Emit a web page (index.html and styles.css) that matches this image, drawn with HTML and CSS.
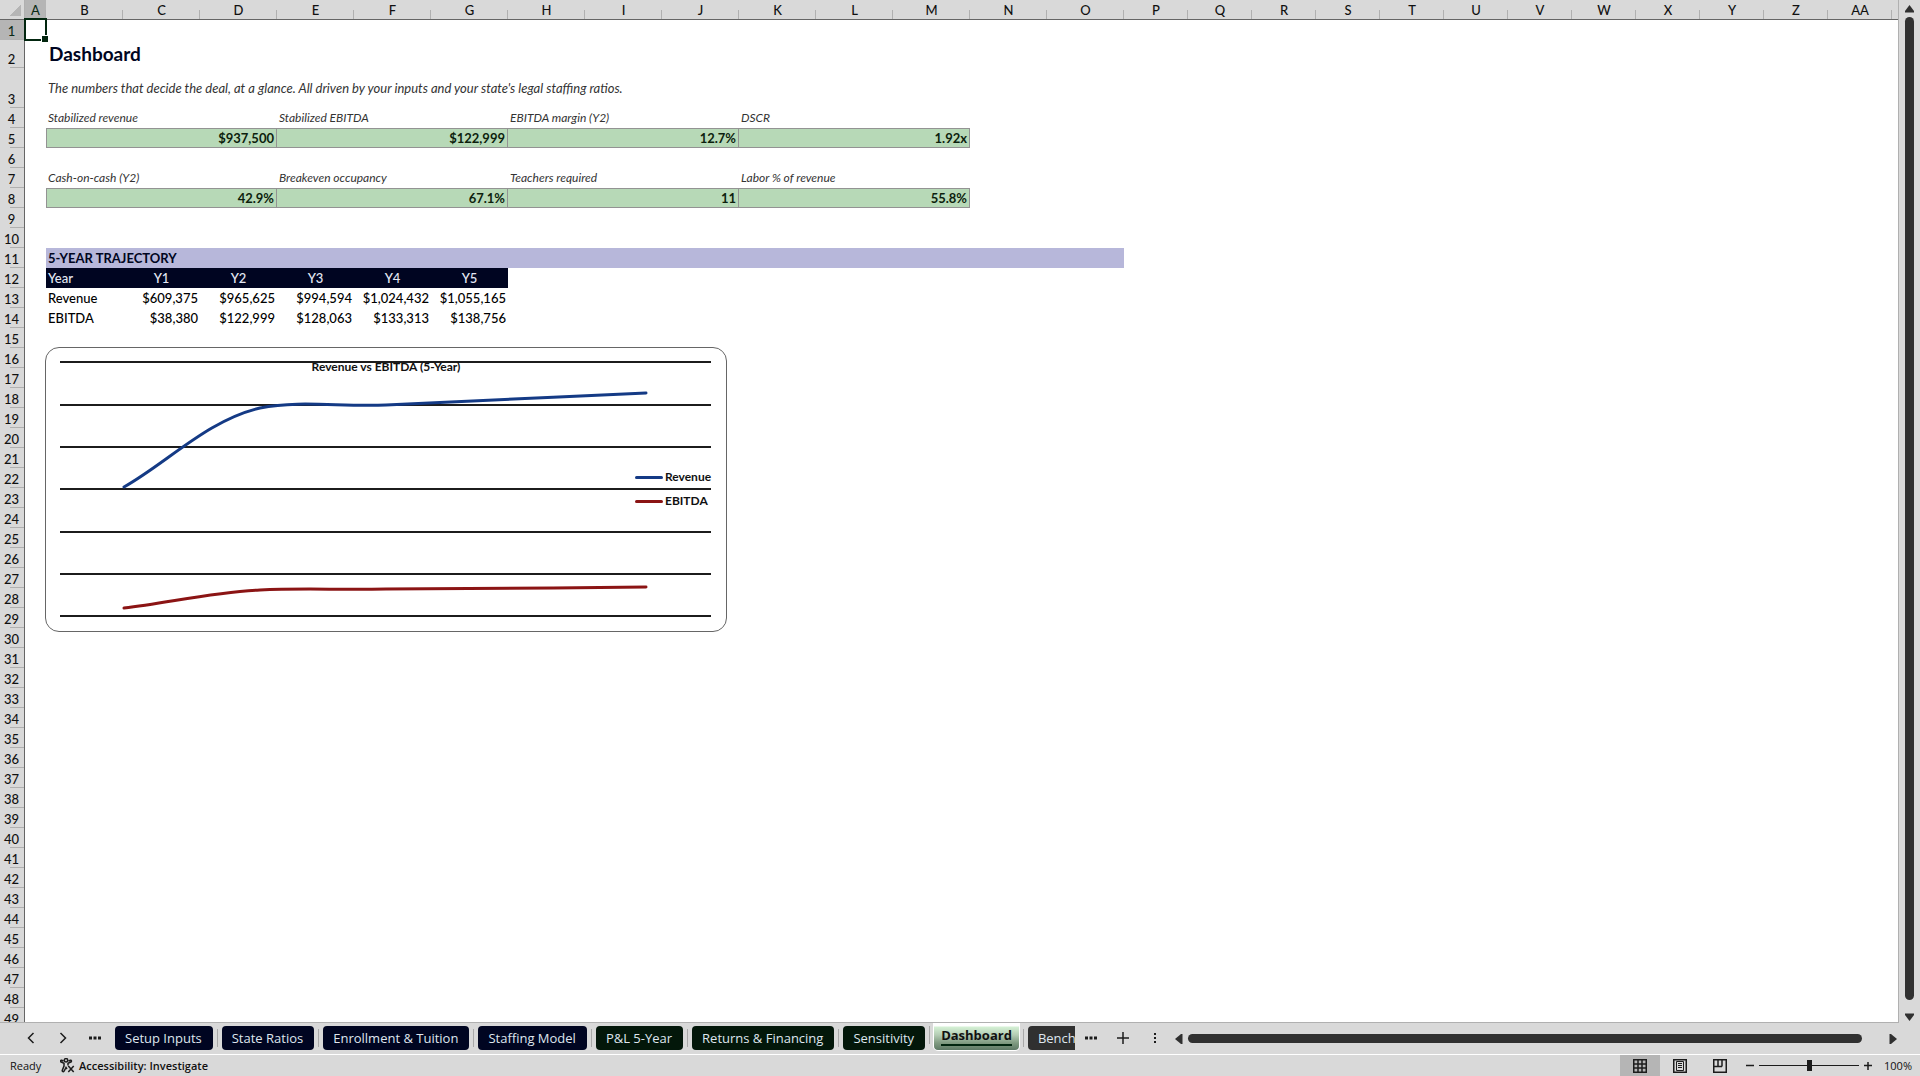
FILE: index.html
```html
<!DOCTYPE html>
<html lang="en">

<head>
    <meta charset="UTF-8">
    <meta name="viewport" content="width=device-width, initial-scale=1.0">
    <title>Dashboard</title>
    <link rel="stylesheet" href="styles.css">
</head>

<body>
    <div class="main">
        <div class="grid">
            <table class="sheet">
                <colgroup>
                    <col class="col_num">
                    <col class="col_a">
                    <col class="col_wide" span="14">
                    <col class="col_std" span="12">
                    <col>
                </colgroup>
                <thead>
                    <tr>
                        <th class="corner"></th>
                        <th class="selected">A</th>
                        <th>B</th>
                        <th>C</th>
                        <th>D</th>
                        <th>E</th>
                        <th>F</th>
                        <th>G</th>
                        <th>H</th>
                        <th>I</th>
                        <th>J</th>
                        <th>K</th>
                        <th>L</th>
                        <th>M</th>
                        <th>N</th>
                        <th>O</th>
                        <th>P</th>
                        <th>Q</th>
                        <th>R</th>
                        <th>S</th>
                        <th>T</th>
                        <th>U</th>
                        <th>V</th>
                        <th>W</th>
                        <th>X</th>
                        <th>Y</th>
                        <th>Z</th>
                        <th>AA</th>
                        <th class="rest"></th>
                    </tr>
                </thead>
                <tbody>
                    <tr>
                        <th class="selected">1</th>
                        <td class="cell_active"><span class="cursor"></span></td>
                        <td colspan="27"></td>
                    </tr>
                    <tr class="row_title">
                        <th>2</th>
                        <td></td>
                        <td colspan="27" class="title">Dashboard</td>
                    </tr>
                    <tr class="row_intro">
                        <th>3</th>
                        <td></td>
                        <td colspan="27" class="intro">The numbers that decide the deal, at a glance. All driven by your inputs and your state's legal staffing ratios.</td>
                    </tr>
                    <tr>
                        <th>4</th>
                        <td></td>
                        <td colspan="3" class="label">Stabilized revenue</td>
                        <td colspan="3" class="label">Stabilized EBITDA</td>
                        <td colspan="3" class="label">EBITDA margin (Y2)</td>
                        <td colspan="3" class="label">DSCR</td>
                        <td colspan="15"></td>
                    </tr>
                    <tr>
                        <th>5</th>
                        <td></td>
                        <td colspan="3" class="kpi kpi_first">$937,500</td>
                        <td colspan="3" class="kpi">$122,999</td>
                        <td colspan="3" class="kpi">12.7%</td>
                        <td colspan="3" class="kpi">1.92x</td>
                        <td colspan="15"></td>
                    </tr>
                    <tr><th>6</th><td colspan="28"></td></tr>
                    <tr>
                        <th>7</th>
                        <td></td>
                        <td colspan="3" class="label">Cash-on-cash (Y2)</td>
                        <td colspan="3" class="label">Breakeven occupancy</td>
                        <td colspan="3" class="label">Teachers required</td>
                        <td colspan="3" class="label">Labor % of revenue</td>
                        <td colspan="15"></td>
                    </tr>
                    <tr>
                        <th>8</th>
                        <td></td>
                        <td colspan="3" class="kpi kpi_first">42.9%</td>
                        <td colspan="3" class="kpi">67.1%</td>
                        <td colspan="3" class="kpi">11</td>
                        <td colspan="3" class="kpi">55.8%</td>
                        <td colspan="15"></td>
                    </tr>
                    <tr><th>9</th><td colspan="28"></td></tr>
                    <tr><th>10</th><td colspan="28"></td></tr>
                    <tr>
                        <th>11</th>
                        <td></td>
                        <td colspan="14" class="section">5-YEAR TRAJECTORY</td>
                        <td colspan="13"></td>
                    </tr>
                    <tr>
                        <th>12</th>
                        <td></td>
                        <td class="year first">Year</td>
                        <td class="year">Y1</td>
                        <td class="year">Y2</td>
                        <td class="year">Y3</td>
                        <td class="year">Y4</td>
                        <td class="year">Y5</td>
                        <td colspan="21"></td>
                    </tr>
                    <tr>
                        <th>13</th>
                        <td></td>
                        <td>Revenue</td>
                        <td class="num">$609,375</td>
                        <td class="num">$965,625</td>
                        <td class="num">$994,594</td>
                        <td class="num">$1,024,432</td>
                        <td class="num">$1,055,165</td>
                        <td colspan="21"></td>
                    </tr>
                    <tr>
                        <th>14</th>
                        <td></td>
                        <td>EBITDA</td>
                        <td class="num">$38,380</td>
                        <td class="num">$122,999</td>
                        <td class="num">$128,063</td>
                        <td class="num">$133,313</td>
                        <td class="num">$138,756</td>
                        <td colspan="21"></td>
                    </tr>
                    <tr><th>15</th><td colspan="28"></td></tr>
                    <tr>
                        <th>16</th>
                        <td></td>
                        <td colspan="27" class="chart_cell">
                            <div class="chart">
                                <svg width="678" height="282" viewBox="1 1 678 282">
                                    <path class="line_grid" d="M15 15H666M15 58H666M15 100H666M15 142H666M15 185H666M15 227H666M15 269H666" />
                                    <path class="line_revenue" d="M79 140C123 115 163 73 215 61C255 53 295 60 341 58C387 56 513 50 601 46" />
                                    <path class="line_ebitda" d="M79 261C123 256 167 245 215 243C255 241 295 243 341 242C387 242 513 241 601 240" />
                                </svg>
                                <div class="chart_title">Revenue vs EBITDA (5-Year)</div>
                                <div class="legend">
                                    <div class="legend_item revenue">Revenue</div>
                                    <div class="legend_item ebitda">EBITDA</div>
                                </div>
                            </div>
                        </td>
                    </tr>
                    <tr><th>17</th><td colspan="28"></td></tr>
                    <tr><th>18</th><td colspan="28"></td></tr>
                    <tr><th>19</th><td colspan="28"></td></tr>
                    <tr><th>20</th><td colspan="28"></td></tr>
                    <tr><th>21</th><td colspan="28"></td></tr>
                    <tr><th>22</th><td colspan="28"></td></tr>
                    <tr><th>23</th><td colspan="28"></td></tr>
                    <tr><th>24</th><td colspan="28"></td></tr>
                    <tr><th>25</th><td colspan="28"></td></tr>
                    <tr><th>26</th><td colspan="28"></td></tr>
                    <tr><th>27</th><td colspan="28"></td></tr>
                    <tr><th>28</th><td colspan="28"></td></tr>
                    <tr><th>29</th><td colspan="28"></td></tr>
                    <tr><th>30</th><td colspan="28"></td></tr>
                    <tr><th>31</th><td colspan="28"></td></tr>
                    <tr><th>32</th><td colspan="28"></td></tr>
                    <tr><th>33</th><td colspan="28"></td></tr>
                    <tr><th>34</th><td colspan="28"></td></tr>
                    <tr><th>35</th><td colspan="28"></td></tr>
                    <tr><th>36</th><td colspan="28"></td></tr>
                    <tr><th>37</th><td colspan="28"></td></tr>
                    <tr><th>38</th><td colspan="28"></td></tr>
                    <tr><th>39</th><td colspan="28"></td></tr>
                    <tr><th>40</th><td colspan="28"></td></tr>
                    <tr><th>41</th><td colspan="28"></td></tr>
                    <tr><th>42</th><td colspan="28"></td></tr>
                    <tr><th>43</th><td colspan="28"></td></tr>
                    <tr><th>44</th><td colspan="28"></td></tr>
                    <tr><th>45</th><td colspan="28"></td></tr>
                    <tr><th>46</th><td colspan="28"></td></tr>
                    <tr><th>47</th><td colspan="28"></td></tr>
                    <tr><th>48</th><td colspan="28"></td></tr>
                    <tr><th>49</th><td colspan="28"></td></tr>
                </tbody>
            </table>
        </div>
        <div class="scroll_y">
            <svg width="9" height="8" viewBox="0 0 9 8"><path d="M4.500 0L9 6V7.500H0V6z" /></svg>
            <div class="bar_y"></div>
            <svg width="9" height="8" viewBox="0 0 9 8"><path d="M0 0.500H9V2L4.500 8L0 2z" /></svg>
        </div>
    </div>

    <div class="tabs">
        <div class="tabs_nav">
            <button class="icon_btn" aria-label="Previous sheet"><svg width="8" height="12" viewBox="0 0 8 12"><path d="M6.500 1L1.500 6L6.500 11" /></svg></button>
            <button class="icon_btn" aria-label="Next sheet"><svg width="8" height="12" viewBox="0 0 8 12"><path d="M1.500 1L6.500 6L1.500 11" /></svg></button>
            <button class="icon_btn" aria-label="More sheets"><svg width="12" height="4" viewBox="0 0 12 4"><path class="fill" d="M0 .5h3v3H0zM4.500 .5h3v3h-3zM9 .5h3v3H9z" /></svg></button>
        </div>
        <div class="tabs_list">
            <button class="tab navy">Setup Inputs</button>
            <button class="tab navy">State Ratios</button>
            <button class="tab navy">Enrollment &amp; Tuition</button>
            <button class="tab navy">Staffing Model</button>
            <button class="tab green">P&amp;L 5-Year</button>
            <button class="tab green">Returns &amp; Financing</button>
            <button class="tab green">Sensitivity</button>
            <button class="tab current"><span>Dashboard</span></button>
            <button class="tab gray">Bench</button>
        </div>
        <div class="tabs_tools">
            <button class="icon_btn" aria-label="All sheets"><svg width="12" height="4" viewBox="0 0 12 4"><path class="fill" d="M0 .5h3v3H0zM4.500 .5h3v3h-3zM9 .5h3v3H9z" /></svg></button>
            <button class="icon_btn" aria-label="New sheet"><svg width="12" height="12" viewBox="0 0 12 12"><path d="M6 0V12M0 6H12" /></svg></button>
            <button class="icon_btn" aria-label="Resize tabs"><svg width="4" height="12" viewBox="0 0 4 12"><path class="fill" d="M1 1h2v2H1zM1 5h2v2H1zM1 9h2v2H1z" /></svg></button>
        </div>
        <div class="scroll_x">
            <svg width="8" height="10" viewBox="0 0 8 10"><path d="M0 5L6 0H7.500V10H6z" /></svg>
            <div class="bar_x"></div>
            <svg width="8" height="10" viewBox="0 0 8 10"><path d="M8 5L2 0H.5V10H2z" /></svg>
        </div>
    </div>

    <div class="status">
        <span class="ready">Ready</span>
        <button class="access">
            <svg width="15" height="15" viewBox="0 0 15 15">
                <circle cx="6" cy="2.200" r="1.700" />
                <path d="M3.600 3L1.600 2.200C.4 2 .2 3.600 1.200 4L4 5.200V8L2.300 12.300C2 13.500 3.600 14.200 4.200 13L6 9.500L7 11M8.400 3L10.400 2.200C11.600 2 11.800 3.600 10.800 4L8 5.200V7.500" />
                <path d="M8.300 8L13.700 14M13.700 8L8.300 14" />
            </svg>
            Accessibility: Investigate
        </button>
        <div class="views">
            <button class="view on" aria-label="Normal">
                <svg width="14" height="14" viewBox="0 0 14 14"><path d="M.75 .75H13.250V13.250H.75zM5 .75V13.250M9 .75V13.250M.75 5H13.250M.75 9H13.250" /></svg>
            </button>
            <button class="view" aria-label="Page Layout">
                <svg width="14" height="14" viewBox="0 0 14 14"><path d="M.75 .75H13.250V13.250H.75z" /><path class="thin" d="M3.500 2.500H10.500V11.500H3.500zM5 4.500H9M5 6.500H9M5 8.500H9" /></svg>
            </button>
            <button class="view" aria-label="Page Break Preview">
                <svg width="14" height="14" viewBox="0 0 14 14"><path d="M.75 .75H13.250V13.250H.75zM5 .75V7.500M9 .75V7.500M.75 7.500H9" /></svg>
            </button>
        </div>
        <div class="zoom">
            <button class="icon_btn" aria-label="Zoom out"><svg width="8" height="8" viewBox="0 0 8 8"><path d="M0 3.500H8" /></svg></button>
            <input type="range" min="0" max="200" value="100" aria-label="Zoom">
            <button class="icon_btn" aria-label="Zoom in"><svg width="8" height="8" viewBox="0 0 8 8"><path d="M0 3.500H8M4 0V8" /></svg></button>
            <button class="percent">100%</button>
        </div>
    </div>
</body>

</html>
```
FILE: styles.css
```css
* {
    box-sizing: border-box;
}

body {
    margin: 0;
    height: 100vh;
    display: flex;
    flex-direction: column;
    overflow: hidden;
    background-color: #d9d9d9;
    font-family: Lato, "Liberation Sans", sans-serif;
    font-size: 13px;
    color: #111;
}

button {
    margin: 0;
    padding: 0;
    border: 0;
    background: none;
    font: inherit;
    color: inherit;
}

svg {
    display: block;
}

/* sheet */

.main {
    flex: 1;
    min-height: 0;
    display: flex;
}

.grid {
    flex: 1;
    min-width: 0;
    overflow: hidden;
    background-color: #fff;
    border-right: 1px solid #b0b0b0;
    border-bottom: 1px solid #b0b0b0;
}

.sheet {
    width: 100%;
    table-layout: fixed;
    border-collapse: separate;
    border-spacing: 0;
}

.col_num {
    width: 25px;
}

.col_a {
    width: 21px;
}

.col_wide {
    width: 77px;
}

.col_std {
    width: 64px;
}

.sheet tr {
    height: 20px;
}

.sheet th,
.sheet td {
    padding: 0 2px;
    line-height: 20px;
    white-space: nowrap;
    vertical-align: bottom;
    text-align: left;
    font-weight: 500;
}

.sheet td {
    color: #000;
}

.sheet th {
    padding: 0;
    line-height: 18px;
    text-align: center;
    color: #111;
    background: linear-gradient(#b0b0b0, #b0b0b0) no-repeat right bottom #d9d9d9;
}

.sheet thead th {
    border-bottom: 1px solid #666;
    background-size: 1px 9px;
}

.sheet tbody th {
    padding-right: 1px;
    border-right: 1px solid #666;
    background-size: 14px 1px;
}

.sheet th.selected {
    background-color: #b5b5b5;
    color: #0b2a17;
}

.sheet .corner {
    background: linear-gradient(135deg, transparent 50%, #b5b5b5 50%) no-repeat 9px 5px / 12px 11px #d9d9d9;
    border-right: 1px solid #b0b0b0;
}

.sheet .rest {
    background: #d9d9d9;
}

.cell_active {
    position: relative;
}

.cursor {
    position: absolute;
    top: -2px;
    right: -1px;
    bottom: -1px;
    left: -1px;
    border: 2px solid #02260f;
}

.cursor::after {
    content: "";
    position: absolute;
    right: -3px;
    bottom: -3px;
    width: 6px;
    height: 6px;
    background-color: #02260f;
    border: solid #fff;
    border-width: 1px 0 0 1px;
}

.sheet .row_title {
    height: 28px;
}

.sheet .row_intro {
    height: 40px;
}

.sheet .title {
    padding: 0 3px;
    vertical-align: middle;
    line-height: 24px;
    font-size: 19px;
    font-weight: bold;
    color: #000521;
}

.sheet .intro {
    vertical-align: middle;
    font-size: 13px;
    font-style: italic;
    font-weight: normal;
    color: #333;
}

.sheet .label {
    font-size: 12px;
    font-style: italic;
    font-weight: normal;
    color: #333;
}

.sheet .kpi {
    border: solid #939393;
    border-width: 1px 1px 1px 0;
    background-color: #b7d9b7;
    line-height: 18px;
    text-align: right;
    font-weight: bold;
    color: #0d1f0d;
}

.sheet .kpi_first {
    border-left-width: 1px;
}

.sheet .section {
    background-color: #b7b7da;
    font-weight: bold;
    color: #000521;
}

.sheet .year {
    background-color: #000521;
    text-align: center;
    color: #e4e8f4;
}

.sheet .first {
    text-align: left;
}

.sheet .num {
    text-align: right;
}

/* chart, floats over rows 16 - 30 */

.sheet .chart_cell {
    position: relative;
    padding: 0;
}

.chart {
    position: absolute;
    top: -1px;
    left: -1px;
    width: 682px;
    height: 285px;
    border: 1px solid #666;
    border-radius: 14px;
    background-color: #fff;
    font-size: 12px;
    font-weight: bold;
    color: #111;
}

.line_grid,
.line_revenue,
.line_ebitda {
    fill: none;
    stroke-width: 3;
    stroke-linecap: round;
}

.line_grid {
    stroke: #1c1c1c;
    stroke-width: 2;
    stroke-linecap: butt;
}

.line_revenue {
    stroke: #143a85;
}

.line_ebitda {
    stroke: #8b1414;
}

.chart_title {
    position: absolute;
    top: 9px;
    left: 0;
    right: 0;
    text-align: center;
}

.legend {
    position: absolute;
    top: 117px;
    right: 13px;
    width: 78px;
}

.legend_item {
    display: flex;
    align-items: center;
    gap: 2px;
    height: 24px;
}

.legend_item::before {
    content: "";
    width: 28px;
    height: 3px;
    flex: none;
    border-radius: 2px;
}

.revenue::before {
    background-color: #143a85;
}

.ebitda::before {
    background-color: #8b1414;
}

/* vertical scroll bar */

.scroll_y {
    width: 21px;
    padding: 5px 0 2px;
    display: flex;
    flex-direction: column;
    align-items: center;
    gap: 4px;
}

.bar_y {
    flex: 1;
    width: 9px;
    margin-bottom: 9px;
    border-radius: 5px;
    background-color: #303030;
}

.scroll_y svg,
.scroll_x svg {
    flex: none;
    fill: #303030;
}

/* sheet tabs */

.tabs {
    height: 32px;
    display: flex;
    border-bottom: 1px solid #fff;
    font-family: "Open Sans", "Noto Sans", sans-serif;
    font-size: 13px;
}

.icon_btn svg {
    fill: none;
    stroke: #1c1c1c;
    stroke-width: 1.500;
}

.icon_btn .fill {
    fill: #1c1c1c;
    stroke: none;
}

.tabs_nav {
    width: 115px;
    padding-left: 15px;
    display: flex;
}

.tabs_nav .icon_btn,
.tabs_tools .icon_btn {
    width: 32px;
    height: 30px;
    display: flex;
    align-items: center;
    justify-content: center;
}

.tabs_list {
    width: 960px;
    display: flex;
    gap: 9px;
    overflow: hidden;
}

.tab {
    position: relative;
    flex: none;
    height: 24px;
    margin-top: 3px;
    padding: 0 11px 0 10px;
    border-radius: 4px;
    line-height: 24px;
    color: #dfe6ee;
}

.tab + .tab::before {
    content: "";
    position: absolute;
    top: 3px;
    left: -5px;
    width: 1px;
    height: 18px;
    background-color: #a8a8a8;
}

.navy {
    background-color: #000521;
}

.green {
    background-color: #03170a;
}

.gray {
    background-color: #303030;
}

.tab.current {
    height: 28px;
    margin: 0 -1px;
    padding: 3px 0 0;
    border: solid #fff;
    border-width: 0 1px 1px;
    border-radius: 0 0 5px 5px;
    background: linear-gradient(#fff 3px, #d4f0d4 4px, #b4ccb4 12px, #7f9a80 20px, #5f7a66 27px);
    font-weight: bold;
    line-height: 18px;
    color: #111;
}

.tab.current span {
    display: block;
    margin: 0 7px 4px;
    border-bottom: 2px solid #02260f;
}

.tabs_tools {
    width: 100px;
    display: flex;
}

.scroll_x {
    flex: 1;
    padding-right: 23px;
    display: flex;
    align-items: center;
    gap: 5px;
}

.bar_x {
    flex: 1;
    height: 9px;
    margin-right: 22px;
    border-radius: 5px;
    background-color: #303030;
}

/* status bar */

.status {
    height: 21px;
    padding-right: 8px;
    display: flex;
    align-items: center;
    font-family: "Open Sans", "Noto Sans", sans-serif;
    font-size: 11px;
    line-height: 14px;
}

.ready {
    width: 60px;
    padding-left: 10px;
}

.access {
    display: flex;
    align-items: center;
    gap: 4px;
    font-weight: 600;
}

.access svg,
.view svg {
    fill: none;
    stroke: #1c1c1c;
    stroke-width: 1.500;
}

.view .thin {
    stroke-width: 1;
}

.views {
    margin-left: auto;
    display: flex;
    align-self: stretch;
}

.view {
    width: 40px;
    display: flex;
    align-items: center;
    justify-content: center;
}

.view.on {
    background-color: #b5b5b5;
}

.zoom {
    display: flex;
    align-items: center;
    gap: 5px;
    padding-left: 6px;
}

.zoom input {
    appearance: none;
    width: 100px;
    height: 12px;
    margin: 0;
    background: linear-gradient(#1c1c1c, #1c1c1c) no-repeat center / 100% 1px;
}

.zoom input::-webkit-slider-thumb {
    appearance: none;
    width: 5px;
    height: 11px;
    background-color: #1c1c1c;
}

.percent {
    width: 35px;
    text-align: right;
}
```
